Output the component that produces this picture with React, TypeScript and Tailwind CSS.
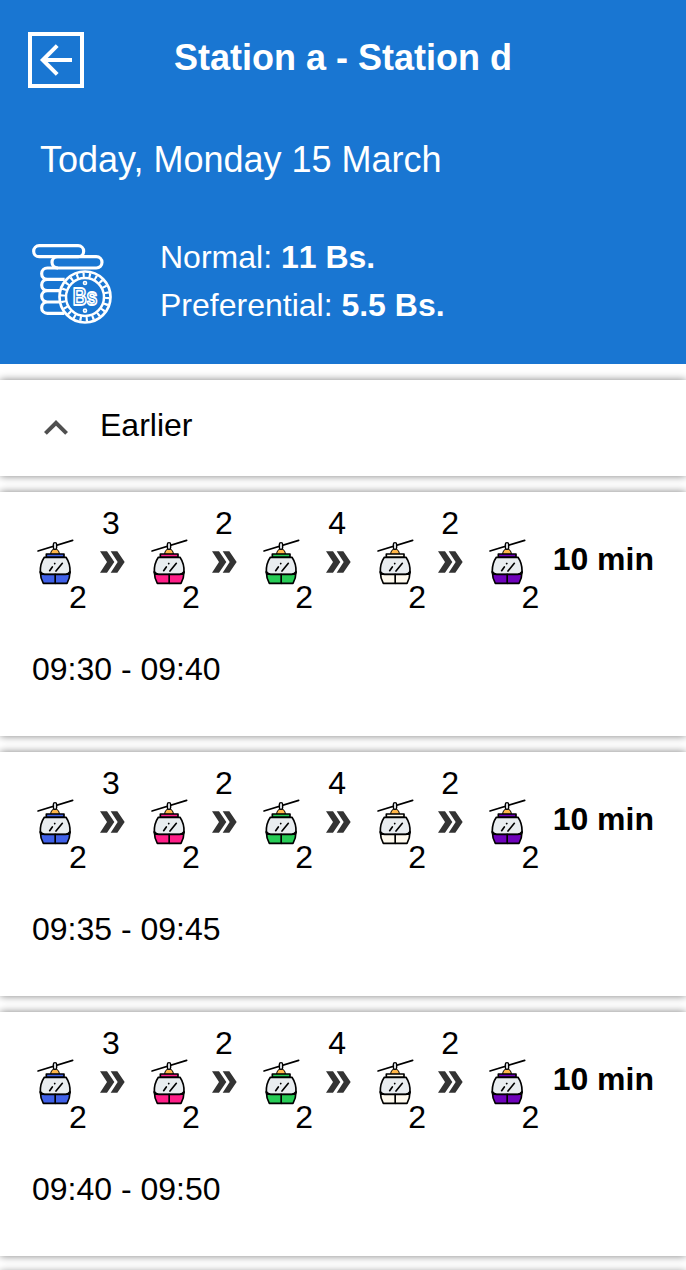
const CABIN_COLORS = ['#4061e8', '#ff1f88', '#27cc56', '#fffaee', '#6f02bb'];
const STEPS = ['3', '2', '4', '2'];
const TIMES = ['09:30 - 09:40', '09:35 - 09:45', '09:40 - 09:50'];

function BackIcon() {
  return (
    <svg className="block h-12 w-12" viewBox="0 0 48 48" fill="none" stroke="white" strokeWidth="4">
      <path d="M40 24H11M25.2 9.6 10.8 24l14.4 14.4" />
    </svg>
  );
}

function CoinsIcon() {
  return (
    <svg className="h-20 w-20 shrink-0" viewBox="0 0 240 240" fill="none" stroke="white" strokeWidth="9.5">
      <rect x="5" y="5" width="150" height="33" rx="16.5" />
      <rect x="60" y="38" width="150" height="34" rx="17" />
      <path d="M78 72H46a17 17 0 0 0 0 34h52M46 106a17 17 0 0 0 0 34h37M46 140a17 17 0 0 0 0 34h35M46 174a17 17 0 0 0 0 34h51" />
      <circle cx="159" cy="159" r="76.5" fill="#1976d2" strokeWidth="8" />
      <circle cx="159" cy="159" r="66" strokeWidth="14" strokeDasharray="6.500 12.350" />
      <circle cx="159" cy="159" r="57" strokeWidth="7.500" />
      <text
        x="159"
        y="182"
        textAnchor="middle"
        fontFamily="Liberation Sans, sans-serif"
        fontWeight="700"
        fontSize="70"
        textLength="74"
        lengthAdjust="spacingAndGlyphs"
        fill="#1976d2"
        strokeWidth="5.5"
        strokeLinejoin="round"
      >
        Bs
      </text>
      <circle cx="159" cy="117" r="4.5" strokeWidth="5" />
      <circle cx="159" cy="200" r="4.5" strokeWidth="5" />
    </svg>
  );
}

function Cabin({ color }: { color: string }) {
  return (
    <svg
      className="ml-0.5 block h-[52px] w-11"
      viewBox="0 0 132 156"
      stroke="black"
      strokeWidth="5"
      strokeLinecap="round"
      strokeLinejoin="round"
    >
      <path d="M12 45 116 13" fill="none" />
      <path d="M50 54c0-9 5-15 13-15s13 6 13 15z" fill="#ffb74a" strokeWidth="3" />
      <rect x="58" y="20" width="10" height="20" rx="5" fill="#d6d9dc" strokeWidth="4" />
      <path d="M31 64h65c9 13 13 29 12 46l-13 6H32l-13-6c-1-17 3-33 12-46z" fill="#e9edf0" />
      <rect x="37" y="54" width="53" height="9" fill={color} />
      <path d="M19 107c2 5 7 8 13 8h63c6 0 11-3 13-8 0 14-4 26-9 35H28c-5-9-9-21-9-35z" fill={color} />
      <path d="M63.500 115v27M85 82 66 105M55 93l-8 11M62 83l0.500-0.500" fill="none" />
    </svg>
  );
}

function Arrows() {
  return (
    <svg className="block h-[22px] w-[25px]" viewBox="0 0 75 66" fill="#333333">
      <path d="M0 1h21l22 32-22 32H0l21-32z" />
      <path d="M32 1h20l22 32-22 32H32l21-32z" />
    </svg>
  );
}

function Trip({ time }: { time: string }) {
  return (
    <section className="h-[244px] shrink-0 bg-white px-8 shadow-[0_0_8px_gray]">
      <div className="flex h-[145px] justify-between">
        <div className="flex">
          {CABIN_COLORS.map((color, i) => (
            <div key={color} className="group flex w-[113.1px] last:w-[68px]">
              <div className="w-[68px] shrink-0 pt-11">
                <div className="group-even:ml-px">
                  <Cabin color={color} />
                </div>
                <p className="-mt-[7px] ml-[37px] leading-8">2</p>
              </div>
              {i < STEPS.length && (
                <div className="flex flex-col pt-[15px]">
                  <p className="ml-0.5 leading-8">{STEPS[i]}</p>
                  <div className="mt-3 group-even:-ml-px">
                    <Arrows />
                  </div>
                </div>
              )}
            </div>
          ))}
        </div>
        <p className="whitespace-nowrap pt-[51px] font-bold leading-8">10 min</p>
      </div>
      <p className="pt-4 leading-8">{time}</p>
    </section>
  );
}

export default function App() {
  return (
    <main className="flex h-[1270px] w-[686px] flex-col overflow-hidden bg-white font-['Liberation_Sans',Arial,sans-serif] text-[32px] text-black">
      <header className="h-[364px] shrink-0 bg-[#1976d2] text-white">
        <div className="flex items-start pt-8">
          <button className="ml-7 h-14 w-14 border-4 border-white" aria-label="Back">
            <BackIcon />
          </button>
          <h1 className="ml-[90px] mt-1.5 text-[36px] font-bold leading-10">Station a - Station d</h1>
        </div>
        <p className="ml-10 mt-[52px] text-[36px] leading-10">Today, Monday 15 March</p>
        <div className="ml-8 mt-[53px] flex gap-12">
          <div className="pt-[11px]">
            <CoinsIcon />
          </div>
          <div className="leading-[48px]">
            <p>
              Normal: <b className="[font-kerning:none]">11 Bs.</b>
            </p>
            <p>
              Preferential: <b>5.5 Bs.</b>
            </p>
          </div>
        </div>
      </header>
      <div className="mt-4 flex flex-col gap-4">
        <section className="flex h-24 shrink-0 items-center bg-white pl-8 shadow-[0_0_8px_gray]">
          <svg className="h-12 w-12" viewBox="0 0 24 24" fill="#505050">
            <path d="m12 8-6 6 1.410 1.410L12 10.830l4.590 4.580L18 14z" />
          </svg>
          <p className="-mt-1.5 ml-5 leading-8">Earlier</p>
        </section>
        {TIMES.map((time) => (
          <Trip key={time} time={time} />
        ))}
        <section className="h-8 shrink-0 bg-white shadow-[0_0_8px_gray]" />
      </div>
    </main>
  );
}
